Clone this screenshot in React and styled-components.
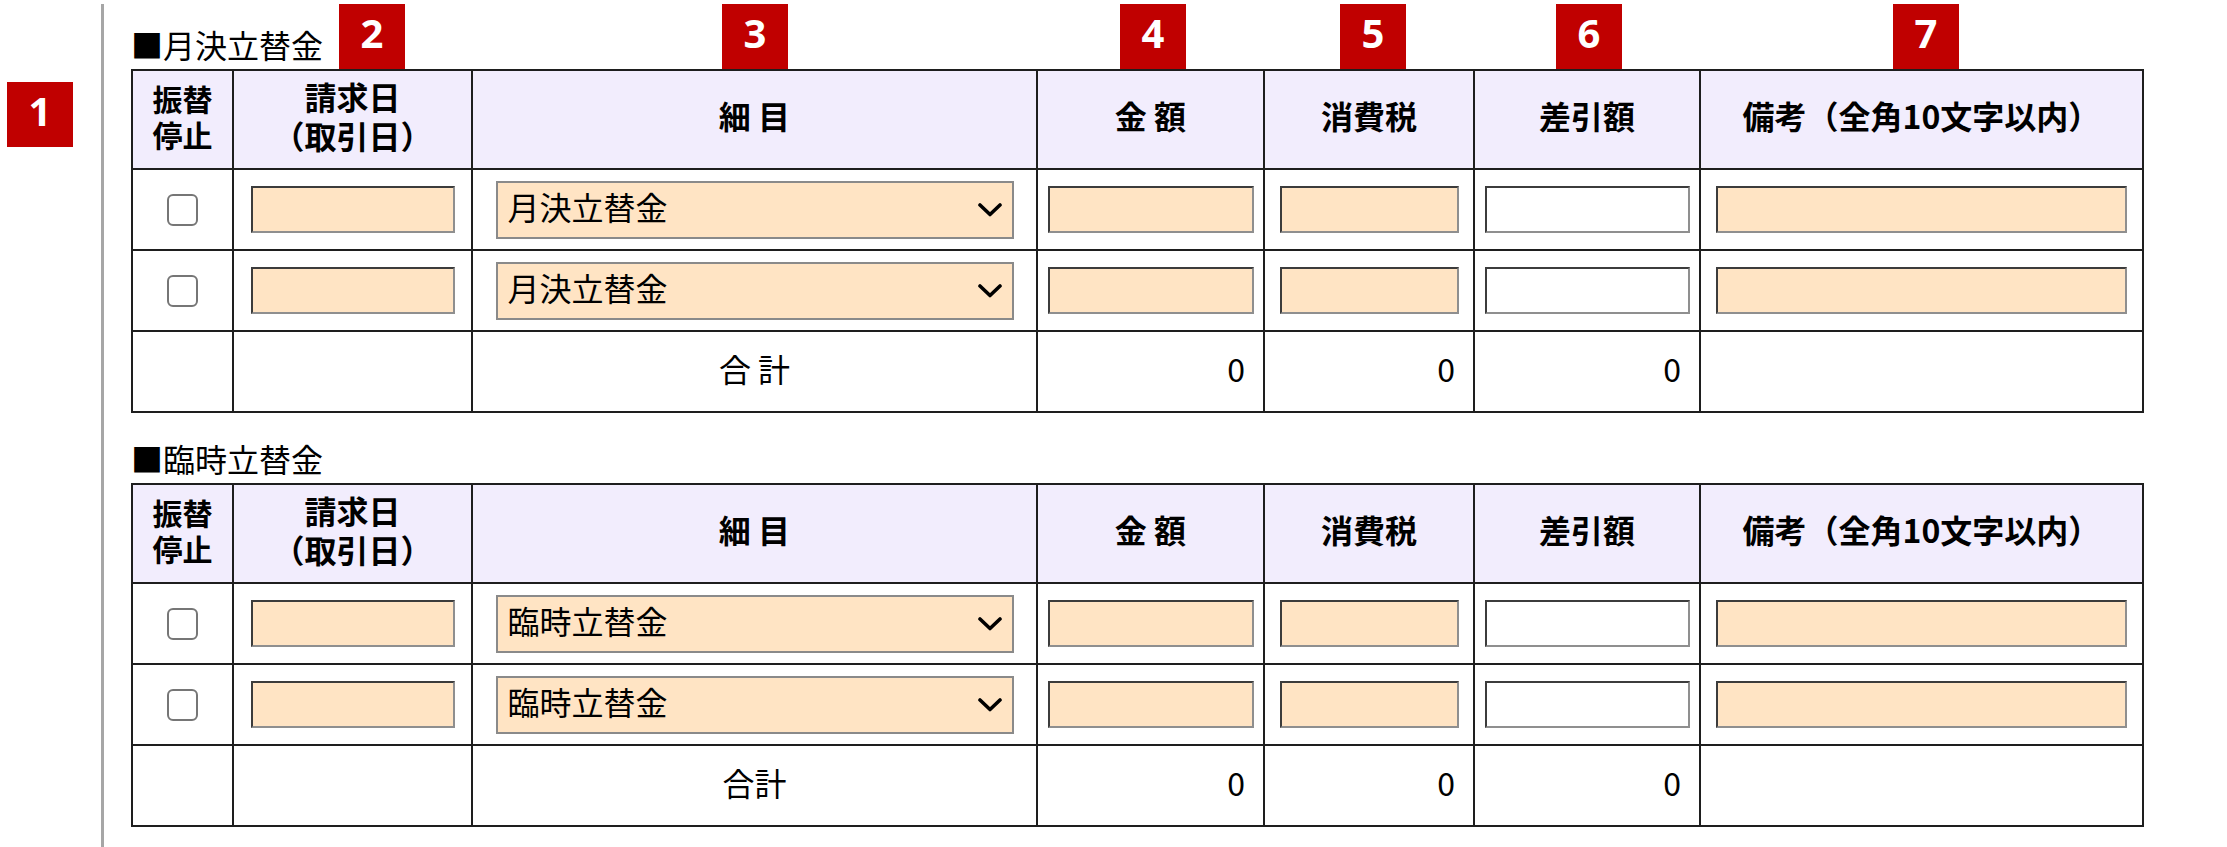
import styled, { createGlobalStyle } from "styled-components";

const GlobalStyle = createGlobalStyle`
  html, body {
    margin: 0;
    padding: 0;
    background: #ffffff;
  }
  body {
    font-family: "Noto Sans CJK JP", "Noto Sans", sans-serif;
    color: #000000;
  }
`;

const columnWidths = [101, 239, 565, 227, 210, 226, 443];

const headers = [
  { lines: ["振替", "停止"], small: true },
  { lines: ["請求日", "（取引日）"] },
  { lines: ["細 目"] },
  { lines: ["金 額"] },
  { lines: ["消費税"] },
  { lines: ["差引額"] },
  { lines: ["備考（全角10文字以内）"] },
];

const sections = [
  { title: "■月決立替金", item: "月決立替金", totalLabel: "合 計" },
  { title: "■臨時立替金", item: "臨時立替金", totalLabel: "合計" },
];

// annotation markers sitting over the first table header (x from content padding edge)
const markers = [
  { n: 2, left: 235 },
  { n: 3, left: 618 },
  { n: 4, left: 1016 },
  { n: 5, left: 1236 },
  { n: 6, left: 1452 },
  { n: 7, left: 1789 },
];

function ChevronDown() {
  return (
    <svg width="24" height="14" viewBox="0 0 24 14">
      <polyline
        points="2,2 12,11.5 22,2"
        fill="none"
        stroke="#000"
        strokeWidth="3.6"
        strokeLinecap="round"
        strokeLinejoin="round"
      />
    </svg>
  );
}

function ExpenseTable({ section }) {
  return (
    <Section>
      <SectionTitle>{section.title}</SectionTitle>
      <Table>
        <colgroup>
          {columnWidths.map((w, i) => (
            <col key={i} style={{ width: w }} />
          ))}
        </colgroup>
        <thead>
          <tr>
            {headers.map((h, i) => (
              <HeadCell key={i} $small={h.small}>
                {h.lines.map((line, j) => (
                  <HeadLine key={j}>{line}</HeadLine>
                ))}
              </HeadCell>
            ))}
          </tr>
        </thead>
        <tbody>
          {[0, 1].map((r) => (
            <tr key={r}>
              <Cell>
                <CheckBox type="checkbox" />
              </Cell>
              <Cell>
                <TextField $w={204} />
              </Cell>
              <Cell>
                <SelectWrap>
                  <Select defaultValue={section.item}>
                    <option>{section.item}</option>
                  </Select>
                  <Arrow>
                    <ChevronDown />
                  </Arrow>
                </SelectWrap>
              </Cell>
              <Cell>
                <TextField $w={206} />
              </Cell>
              <Cell>
                <TextField $w={179} />
              </Cell>
              <Cell>
                <TextField $w={205} $plain />
              </Cell>
              <Cell>
                <TextField $w={411} />
              </Cell>
            </tr>
          ))}
          <tr>
            <Cell />
            <Cell />
            <Cell $text>{section.totalLabel}</Cell>
            <Cell $text $num>0</Cell>
            <Cell $text $num>0</Cell>
            <Cell $text $num>0</Cell>
            <Cell />
          </tr>
        </tbody>
      </Table>
    </Section>
  );
}

export default function App() {
  return (
    <>
      <GlobalStyle />
      <Page>
        <Gutter>
          <Marker $inline>1</Marker>
        </Gutter>
        <Divider />
        <Content>
          {sections.map((s, i) => (
            <ExpenseTable key={i} section={s} />
          ))}
          {markers.map((m) => (
            <Marker key={m.n} style={{ left: m.left }}>
              {m.n}
            </Marker>
          ))}
        </Content>
      </Page>
    </>
  );
}

const Page = styled.div`
  display: flex;
  height: 847px;
  padding-top: 4px;
  box-sizing: border-box;
  overflow: hidden;
`;

const Gutter = styled.div`
  width: 101px;
  flex-shrink: 0;
  padding: 78px 0 0 7px;
  box-sizing: border-box;
`;

const Divider = styled.div`
  width: 3px;
  flex-shrink: 0;
  background: #a6a6a6;
`;

const Content = styled.div`
  position: relative;
  padding-left: 27px;
`;

const Marker = styled.div`
  position: ${(p) => (p.$inline ? "static" : "absolute")};
  top: 0;
  width: 66px;
  height: 65px;
  padding-bottom: 8px;
  box-sizing: border-box;
  display: flex;
  align-items: center;
  justify-content: center;
  background: #c00000;
  color: #ffffff;
  font-family: "Open Sans", "Noto Sans", sans-serif;
  font-weight: 700;
  font-size: 40px;
  line-height: 1;
`;

const Section = styled.section`
  & + & {
    margin-top: 25px;
  }
`;

const SectionTitle = styled.div`
  margin: 20px 0 5px;
  font-size: 32px;
  line-height: 40px;
  font-weight: 400;

  ${Section} + ${Section} & {
    margin-top: 0;
  }
`;

const Table = styled.table`
  width: 2011px;
  table-layout: fixed;
  border-collapse: collapse;
  border: 2px solid #1e1e1e;
`;

const HeadCell = styled.th`
  height: 99px;
  padding: 0 0 8px;
  box-sizing: border-box;
  background: #f2edfd;
  border: 2px solid #1e1e1e;
  font-size: ${(p) => (p.$small ? 30 : 32)}px;
  font-weight: 700;
  line-height: 1.2;
  text-align: center;
  vertical-align: middle;
  white-space: nowrap;
`;

const HeadLine = styled.div``;

const Cell = styled.td`
  height: 81px;
  padding: 0 ${(p) => (p.$num ? "18px" : "0")} ${(p) => (p.$text ? "8px" : "0")} 0;
  box-sizing: border-box;
  border: 2px solid #1e1e1e;
  font-size: 32px;
  font-weight: 400;
  text-align: ${(p) => (p.$num ? "right" : "center")};
  vertical-align: middle;
`;

const CheckBox = styled.input`
  appearance: none;
  display: block;
  margin: 0 auto;
  width: 31px;
  height: 32px;
  border: 2px solid #767676;
  border-radius: 6px;
  background: #ffffff;
  box-sizing: border-box;
`;

const TextField = styled.input`
  display: block;
  margin: 0 auto;
  width: ${(p) => p.$w}px;
  height: 47px;
  box-sizing: border-box;
  border-style: solid;
  border-width: 2px;
  border-color: #3c3c3c #8f8f8f #8f8f8f #3c3c3c;
  background: ${(p) => (p.$plain ? "#ffffff" : "#ffe4c4")};
  padding: 0 6px;
  font-size: 28px;
`;

const SelectWrap = styled.div`
  position: relative;
  width: 518px;
  height: 58px;
  margin: 0 auto;
`;

const Select = styled.select`
  appearance: none;
  width: 100%;
  height: 100%;
  box-sizing: border-box;
  border: 2px solid #8a8a8a;
  border-radius: 0;
  background: #ffe4c4;
  padding: 0 50px 10px 10px;
  font-family: "Noto Sans CJK JP", "Noto Sans", sans-serif;
  font-size: 32px;
  color: #000000;
  outline: none;
`;

const Arrow = styled.span`
  position: absolute;
  right: 12px;
  top: 22px;
  display: flex;
  pointer-events: none;
`;
